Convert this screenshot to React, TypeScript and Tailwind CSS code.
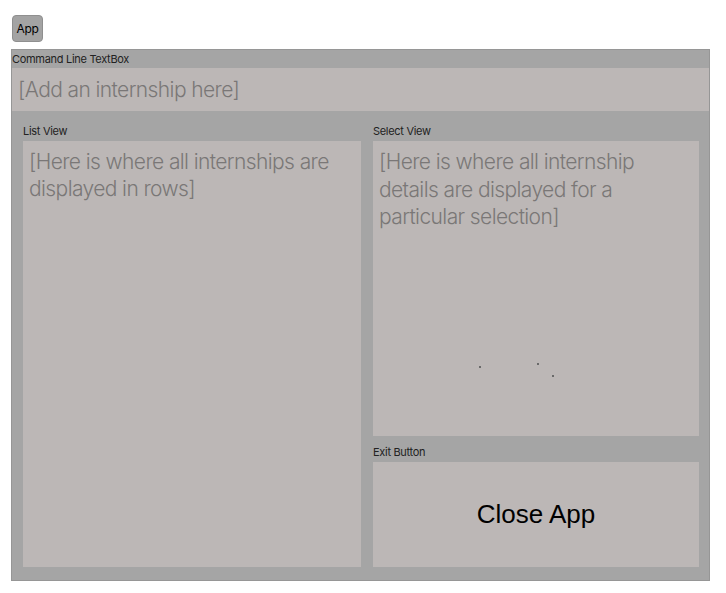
export default function App() {
  const font = { fontFamily: "Inter, 'Noto Sans', sans-serif" };
  return (
    <div className="w-[726px] h-[593px] bg-white relative" style={font}>
      <div className="pt-[15px] pl-[12px]">
        <button className="w-[31px] h-[27px] rounded-[4px] bg-[#a3a3a3] border border-[#8f8f8f] text-[12px] text-black flex items-center justify-center leading-none tracking-[-0.3px]">
          App
        </button>
      </div>

      <div className="ml-[11px] mt-[7px] w-[699px] h-[532px] bg-[#a5a5a5] border border-[#969696] flex flex-col">
        <div className="h-[18px] text-[11px] leading-[18px] text-[#222] tracking-[-0.3px]">
          Command Line TextBox
        </div>
        <div className="h-[43px] bg-[#bcb7b6] pl-[6px] flex items-center text-[21px] font-light text-[#7a7777] tracking-[-0.6px]">
          [Add an internship here]
        </div>

        <div className="flex-1 flex gap-[12px] pl-[11px] pr-[10px] pb-[13px]">
          <div className="w-[338px] flex flex-col">
            <div className="h-[30px] pt-[12px] text-[11px] leading-[16px] text-[#222] tracking-[-0.3px]">List View</div>
            <div className="flex-1 bg-[#bcb7b6] px-[6px] pt-[7px] text-[21px] font-light leading-[27px] text-[#7a7777] tracking-[-0.6px]">
              [Here is where all internships are displayed in rows]
            </div>
          </div>

          <div className="flex-1 flex flex-col">
            <div className="h-[30px] pt-[12px] text-[11px] leading-[16px] text-[#222] tracking-[-0.3px]">Select View</div>
            <div className="h-[295px] bg-[#bcb7b6] px-[6px] pt-[7px] text-[21px] font-light leading-[27.5px] text-[#7a7777] tracking-[-0.6px] relative">
              [Here is where all internship details are displayed for a particular selection]
              <span className="absolute left-[106px] top-[225px] w-[2px] h-[2px] bg-[#6a6a6a]" />
              <span className="absolute left-[164px] top-[222px] w-[2px] h-[2px] bg-[#6a6a6a]" />
              <span className="absolute left-[179px] top-[234px] w-[2px] h-[2px] bg-[#6a6a6a]" />
            </div>
            <div className="h-[26px] pt-[8px] text-[11px] leading-[16px] text-[#222] tracking-[-0.3px]">Exit Button</div>
            <div
              className="flex-1 bg-[#bcb7b6] flex items-center justify-center text-[26px] text-black"
              style={{ fontFamily: "'Liberation Sans', Arial, sans-serif" }}
            >
              Close App
            </div>
          </div>
        </div>
      </div>
    </div>
  );
}
